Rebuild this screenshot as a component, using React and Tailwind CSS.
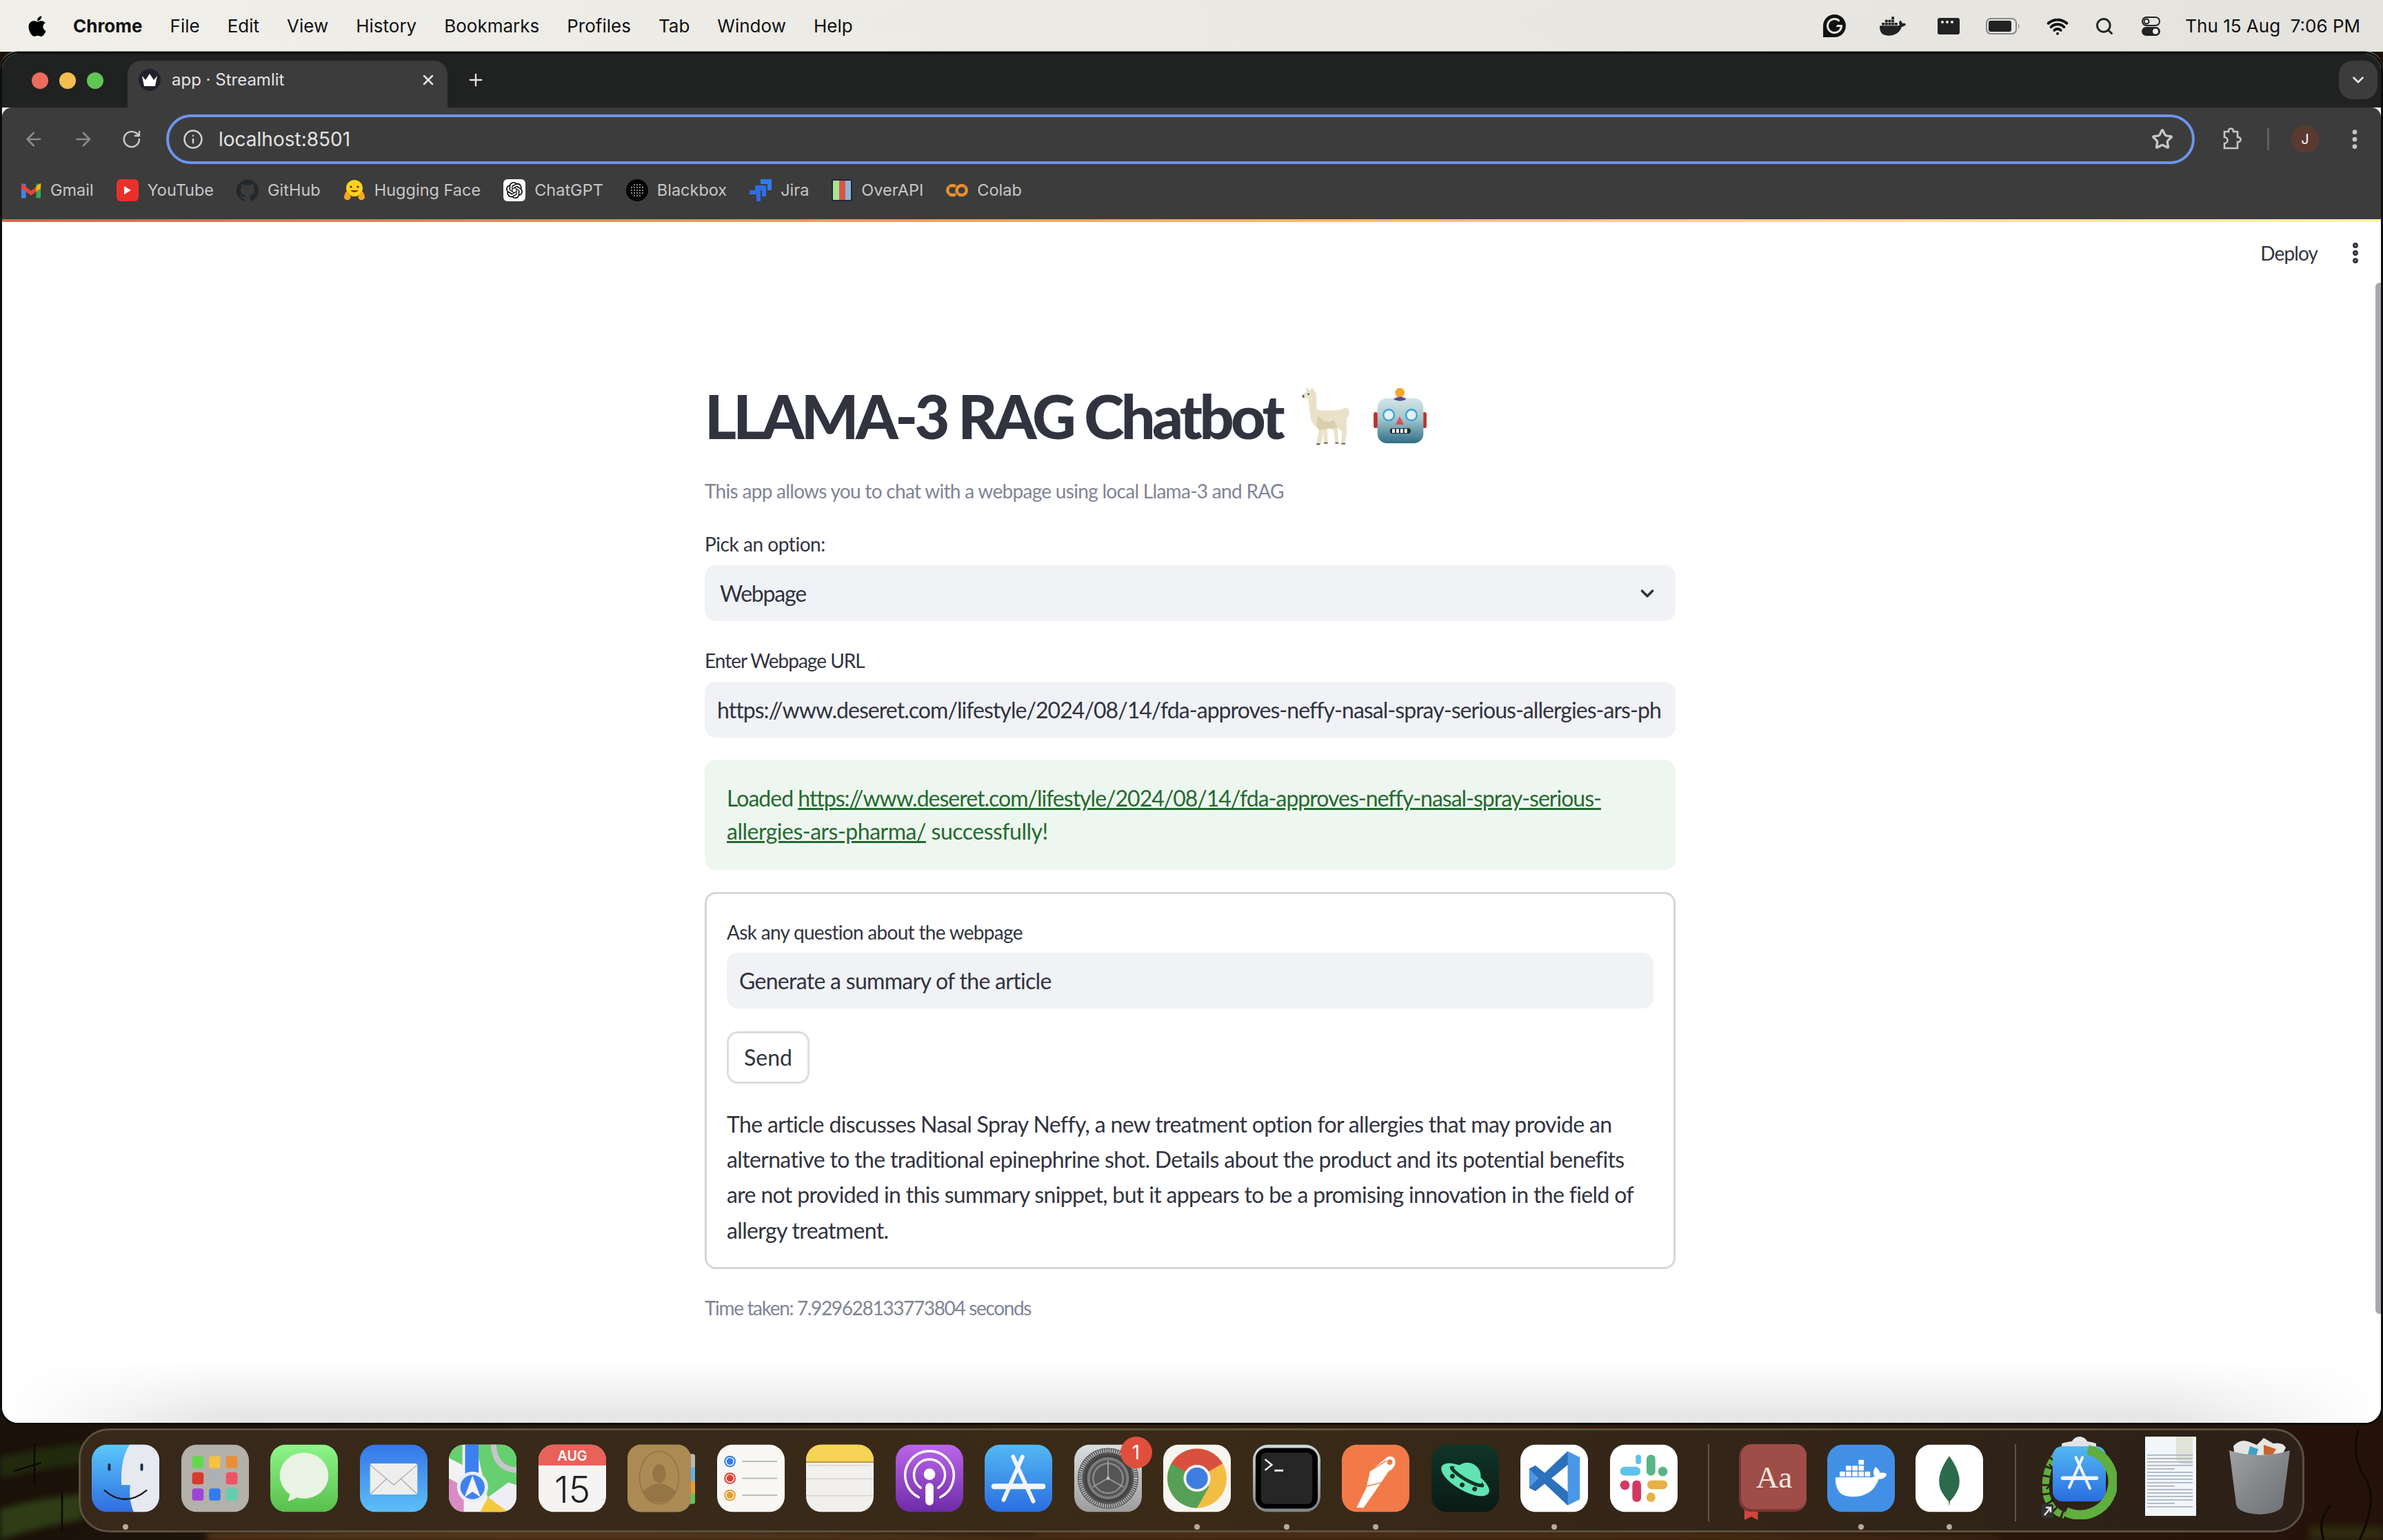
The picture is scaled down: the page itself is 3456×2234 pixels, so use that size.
import React from 'react';
import { FaApple } from 'react-icons/fa';
import { SiGrammarly, SiDocker, SiGithub, SiOpenai, SiGooglecolab } from 'react-icons/si';
import { ArrowLeft, ArrowRight, RotateCw, Info, Star, EllipsisVertical, ChevronDown, Plus, X, Wifi, Search } from 'lucide-react';

const sans = 'font-["Lato",sans-serif]';
const sys = 'font-["Inter",sans-serif]';

const menus = ['File', 'Edit', 'View', 'History', 'Bookmarks', 'Profiles', 'Tab', 'Window', 'Help'];

const Gmail = () => (
  <svg viewBox="0 0 32 32" className="w-[30px] h-[32px]">
    <rect x="1" y="6" width="7" height="22" fill="#4285f4" />
    <rect x="24" y="6" width="7" height="22" fill="#34a853" />
    <path d="M1 5L16 17 31 5V13L16 24 1 13z" fill="#ea4335" />
    <path d="M24 10l7-5v8l-7 5z" fill="#fbbc04" />
  </svg>
);

const YouTube = () => (
  <div className="w-[32px] h-[32px] rounded-[6px] bg-[#e9302a] flex items-center justify-center">
    <svg viewBox="0 0 10 12" className="w-[10px] h-[12px]"><path d="M0 0l10 6-10 6z" fill="#fff" /></svg>
  </div>
);

const Hugging = () => (
  <svg viewBox="0 0 32 32" className="w-[32px] h-[32px]">
    <circle cx="16" cy="13" r="12" fill="#ffd21e" />
    <circle cx="11" cy="11" r="1.6" fill="#333" />
    <circle cx="21" cy="11" r="1.6" fill="#333" />
    <path d="M10 16q6 6 12 0z" fill="#8a2f22" />
    <path d="M1 26q1-8 5-9l5 9q-2 5-6 4t-4-4zM31 26q-1-8-5-9l-5 9q2 5 6 4t4-4z" fill="#f5a623" />
  </svg>
);

const Gpt = () => (
  <div className="w-[32px] h-[32px] rounded-[6px] bg-white flex items-center justify-center text-black">
    <SiOpenai className="w-[24px] h-[24px]" />
  </div>
);

const Blackbox = () => (
  <svg viewBox="0 0 32 32" className="w-[32px] h-[32px]">
    <circle cx="16" cy="16" r="16" fill="#050505" />
    {[-8, -4, 0, 4, 8].map((dx) =>
      [-8, -4, 0, 4, 8].map((dy) =>
        dx * dx + dy * dy < 90 ? <circle key={`${dx}${dy}`} cx={16 + dx} cy={16 + dy} r="1" fill="#b5b5b5" /> : null
      )
    )}
  </svg>
);

const Jira = () => (
  <svg viewBox="0 0 32 32" className="w-[32px] h-[32px]">
    <path d="M16 0h16v16h-6V7h-10z" fill="#2f7bf0" />
    <path d="M8 9h16v16h-6v-9H8z" fill="#2a6fe8" />
    <path d="M0 16h16v16h-6v-10H0z" fill="#2b6de6" />
  </svg>
);

const OverApi = () => (
  <div className="w-[30px] h-[32px] flex rounded-[3px] border-2 border-[#20263a] overflow-hidden">
    <div className="flex-1 bg-[#a6e58f]" />
    <div className="flex-1 bg-[#d9534a]" />
    <div className="flex-1 bg-[#8fb4d8]" />
  </div>
);

const bookmarks = [
  { name: 'Gmail', icon: <Gmail /> },
  { name: 'YouTube', icon: <YouTube /> },
  { name: 'GitHub', icon: <SiGithub className="w-[32px] h-[32px] text-[#23282c]" /> },
  { name: 'Hugging Face', icon: <Hugging /> },
  { name: 'ChatGPT', icon: <Gpt /> },
  { name: 'Blackbox', icon: <Blackbox /> },
  { name: 'Jira', icon: <Jira /> },
  { name: 'OverAPI', icon: <OverApi /> },
  { name: 'Colab', icon: <SiGooglecolab className="w-[32px] h-[32px] text-[#e8912d]" /> },
];

const Tile = ({ children, fill = '#fff', id, stops }) => (
  <svg viewBox="0 0 100 100" className="w-full h-full">
    {stops && (
      <defs>
        <linearGradient id={id} x1="0" y1="0" x2="0" y2="1">
          <stop offset="0" stopColor={stops[0]} />
          <stop offset="1" stopColor={stops[1]} />
        </linearGradient>
      </defs>
    )}
    <clipPath id={`${id}-c`}><rect width="100" height="100" rx="23" /></clipPath>
    <g clipPath={`url(#${id}-c)`}>
      <rect width="100" height="100" fill={stops ? `url(#${id})` : fill} />
      {children}
    </g>
  </svg>
);

const Finder = () => (
  <Tile id="finder" stops={['#5ac8fa', '#2f6de0']}>
    <path d="M56 0h44v100H62Q54 80 57 60H44Q42 22 56 0z" fill="#e6e9f0" />
    <rect x="24" y="28" width="4" height="11" rx="2" fill="#1f2a44" />
    <rect x="72" y="28" width="4" height="11" rx="2" fill="#1f2a44" />
    <path d="M19 68q30 26 62 0" fill="none" stroke="#1c1c24" strokeWidth="2.5" strokeLinecap="round" />
  </Tile>
);

const Launchpad = () => {
  const colors = ['#62d84e', '#f5c242', '#e98f35', '#d83a2e', '#a9b2b5', '#ee5267', '#9b45d8', '#2f7df0', '#5fd0ae'];
  return (
    <Tile id="launch" fill="#b4b0aa">
      {colors.map((c, i) => (
        <rect key={c} x={16 + (i % 3) * 25} y={17 + Math.floor(i / 3) * 24} width="17" height="18" rx="4" fill={c} />
      ))}
    </Tile>
  );
};

const Messages = () => (
  <Tile id="msg" stops={['#8df58a', '#58bf4c']}>
    <ellipse cx="50" cy="46" rx="36" ry="34" fill="#e8f3e4" />
    <path d="M30 70l-4 14q12-3 18-10z" fill="#e8f3e4" />
  </Tile>
);

const Mail = () => (
  <Tile id="mail" stops={['#3576e8', '#5cc0f8']}>
    <rect x="15" y="28" width="70" height="46" rx="3" fill="#eeeeee" />
    <path d="M15 30l35 30 35-30M15 74l25-24M85 74L60 50" fill="none" stroke="#a8a8a8" strokeWidth="1.2" />
  </Tile>
);

const Maps = () => (
  <Tile id="maps" fill="#f2f2f2">
    <path d="M44 0h56v60L90 58 60 90 44 20z" fill="#66cf70" />
    <path d="M0 0h20v30L0 20z" fill="#66cf70" />
    <path d="M0 50l22 12v38H0z" fill="#d98bc4" />
    <path d="M46 100l12-22 30 22z" fill="#f4c93c" />
    <path d="M58 78l30-22 12 4v40H88z" fill="#eeeef4" />
    <rect x="24" y="0" width="20" height="50" fill="#3a80ee" />
    <path d="M66 0q2 36 34 38" fill="none" stroke="#c8c5cc" strokeWidth="8" />
    <circle cx="35" cy="63" r="23" fill="#e9eef7" />
    <circle cx="35" cy="63" r="18" fill="#3f82ee" />
    <path d="M35 46l12 32-12-8-12 8z" fill="#f2f5fb" />
  </Tile>
);

const Calendar = () => (
  <Tile id="cal" fill="#f5f4f2">
    <rect width="100" height="31" fill="#e8625a" />
    <text x="50" y="24" textAnchor="middle" fill="#fff" fontFamily="Inter, sans-serif" fontSize="20" fontWeight="600">AUG</text>
    <text x="50" y="86" textAnchor="middle" fill="#222" fontFamily="Inter, sans-serif" fontSize="54" fontWeight="300">15</text>
  </Tile>
);

const Contacts = () => (
  <svg viewBox="0 0 100 100" className="w-full h-full">
    <rect x="88" y="14" width="12" height="22" rx="3" fill="#b8b8b8" />
    <rect x="88" y="34" width="12" height="22" fill="#59b5f0" />
    <rect x="88" y="54" width="12" height="20" fill="#ef9a2e" />
    <rect x="88" y="72" width="12" height="16" rx="3" fill="#5ec45c" />
    <rect width="94" height="100" rx="20" fill="#ac8a54" />
    <ellipse cx="47" cy="49" rx="29" ry="39" fill="none" stroke="#947445" strokeWidth="1.6" />
    <ellipse cx="47" cy="43" rx="10" ry="14" fill="#957545" />
    <path d="M22 70q25-24 50 0q-8 16-25 16T22 70z" fill="#957545" />
  </svg>
);

const Reminders = () => (
  <Tile id="rem" fill="#f8f7f4">
    {[['#2f7df0', 25], ['#e33d33', 50], ['#ea9a2a', 75]].map(([c, y]) => (
      <g key={c}>
        <circle cx="19" cy={y} r="7.5" fill="#fff" stroke={c} strokeWidth="2" />
        <circle cx="19" cy={y} r="5" fill={c} />
        <rect x="37" y={y - 1} width="52" height="2" fill="#bdbdbd" />
      </g>
    ))}
  </Tile>
);

const Notes = () => (
  <Tile id="notes" fill="#f1f0ec">
    <rect width="100" height="26" fill="#f7d356" />
    <rect y="25" width="100" height="2" fill="#b09a4a" />
    <path d="M4 31H96" stroke="#c3c1bb" strokeWidth="2" strokeDasharray="1.5 1.5" />
    <rect y="50" width="100" height="1.5" fill="#d5d3ce" />
    <rect y="75" width="100" height="1.5" fill="#d5d3ce" />
  </Tile>
);

const Podcasts = () => (
  <Tile id="pod" stops={['#bb66ea', '#6e2ba8']}>
    <g fill="none" stroke="#fff" strokeWidth="3.5" strokeLinecap="round">
      <path d="M34 78a36 36 0 1 1 32 0" />
      <path d="M37 64a23 23 0 1 1 26 0" />
    </g>
    <circle cx="50" cy="44" r="8.5" fill="#fff" />
    <rect x="44" y="57" width="12" height="33" rx="6" fill="#fff" />
  </Tile>
);

const AppGlyph = ({ s = 1, ox = 0, oy = 0 }) => (
  <g transform={`translate(${ox} ${oy}) scale(${s})`} stroke="#f2f6fc" strokeLinecap="round" fill="none">
    <path d="M56 18L28 82" strokeWidth="6" />
    <path d="M42 18L72 84" strokeWidth="6" />
    <path d="M14 62H86" strokeWidth="8" />
  </g>
);

const AppStore = () => (
  <Tile id="appst" stops={['#53b8f3', '#2a6ee0']}>
    <AppGlyph />
  </Tile>
);

const Settings = () => (
  <div className="relative w-full h-full">
    <Tile id="sett" stops={['#d8dfe3', '#9d9d9d']}>
      <circle cx="50" cy="50" r="45" fill="#505050" />
      <circle cx="50" cy="50" r="41" fill="none" stroke="#c0c0c0" strokeWidth="6" strokeDasharray="1.6 1.6" />
      <circle cx="50" cy="50" r="35" fill="#444" />
      <circle cx="50" cy="50" r="31" fill="#7d7d7d" />
      <circle cx="50" cy="50" r="27" fill="#555" />
      <circle cx="50" cy="50" r="22" fill="none" stroke="#8a8a8a" strokeWidth="2.5" />
      <path d="M50 50L50 24M50 50L73 63M50 50L27 63" stroke="#9a9a9a" strokeWidth="2" />
      <circle cx="50" cy="50" r="2.5" fill="#bbb" />
    </Tile>
    <div className={`absolute top-[-11px] right-[-15px] w-[46px] h-[46px] rounded-full bg-[#e04f3d] text-white text-[28px] flex items-center justify-center ${sys}`}>1</div>
  </div>
);

const Chrome = () => (
  <Tile id="chr" fill="#f7f5f0">
    <circle cx="50" cy="50" r="44" fill="#f2bd42" />
    <path d="M50 50L88 28A44 44 0 0 0 12 28L30 62z" fill="#d9503f" />
    <path d="M50 50L12 28A44 44 0 0 0 50 94L68 62z" fill="#55a056" />
    <circle cx="50" cy="50" r="20" fill="#f5f5f5" />
    <circle cx="50" cy="50" r="16" fill="#3f7de0" />
  </Tile>
);

const Terminal = () => (
  <Tile id="term" stops={['#c9d9de', '#7f8488']}>
    <rect x="4" y="5" width="92" height="90" rx="16" fill="#000" />
    <rect x="12" y="12" width="76" height="76" rx="8" fill="#262626" />
    <path d="M18 22l10 8-10 8" fill="none" stroke="#eee" strokeWidth="2.5" />
    <rect x="32" y="37" width="13" height="3" fill="#eee" />
  </Tile>
);

const Postman = () => (
  <Tile id="post" fill="#f17a48">
    <path d="M68 18q10-2 11 7t-10 15L50 68 32 94l-10-1 14-28 6-26z" fill="#fff" />
    <path d="M40 40l26-16M36 62l24-6" stroke="#f17a48" strokeWidth="1.5" />
    <circle cx="71" cy="26" r="4" fill="#f17a48" />
  </Tile>
);

const Ufo = () => (
  <Tile id="ufo" stops={['#113528', '#0a1a15']}>
    <g transform="rotate(30 50 52)">
      <path d="M30 46a20 20 0 0 1 40 0z" fill="#62e3b4" />
      <ellipse cx="50" cy="52" rx="40" ry="16" fill="#62e3b4" />
      <ellipse cx="50" cy="47" rx="29" ry="7" fill="#113528" />
      <ellipse cx="50" cy="44" rx="24" ry="5" fill="#62e3b4" />
      <circle cx="31" cy="57" r="3.5" fill="#113528" />
      <circle cx="50" cy="61" r="3.5" fill="#113528" />
      <circle cx="69" cy="57" r="3.5" fill="#113528" />
    </g>
  </Tile>
);

const VsCode = () => (
  <Tile id="vsc" fill="#fff">
    <path d="M70 10l18 9v62l-18 9-34-32-14 11-9-5V36l9-5 14 11z" fill="#4a97e8" />
    <path d="M70 10v80L36 58 22 69l-9-5 14-14-14-14 9-5 14 11z" fill="#2d70bb" />
    <path d="M70 30v40L46 50z" fill="#fff" />
  </Tile>
);

const Slack = () => (
  <Tile id="slk" fill="#fff">
    <rect x="15" y="33" width="30" height="13" rx="6.5" fill="#5ec2ee" />
    <rect x="38" y="15" width="8" height="14" rx="4" fill="#5ec2ee" />
    <rect x="54" y="15" width="13" height="31" rx="6.5" fill="#58b585" />
    <circle cx="78" cy="40" r="7" fill="#58b585" />
    <rect x="55" y="53" width="30" height="13" rx="6.5" fill="#e5b243" />
    <rect x="54" y="71" width="13" height="14" rx="6.5" fill="#e5b243" />
    <rect x="33" y="53" width="13" height="32" rx="6.5" fill="#d23a62" />
    <circle cx="22" cy="60" r="7" fill="#d23a62" />
  </Tile>
);

const Dictionary = () => (
  <svg viewBox="0 0 100 112" className="w-full h-[110px] self-start">
    <path d="M8 96h20v16l-10-5-10 5z" fill="#d0473a" />
    <rect width="100" height="100" rx="18" fill="#7d3530" />
    <rect x="3" width="97" height="96" rx="16" fill="#9e4d48" />
    <text x="52" y="64" textAnchor="middle" fill="#f2e6dc" fontFamily="Liberation Serif, serif" fontSize="46">Aa</text>
  </svg>
);

const Docker = () => (
  <Tile id="dok" fill="#4290e6">
    <foreignObject x="12" y="12" width="76" height="76">
      <SiDocker className="w-full h-full text-white" />
    </foreignObject>
  </Tile>
);

const Mongo = () => (
  <Tile id="mgo" fill="#fff">
    <path d="M50 17Q74 50 60 72Q55 80 51 84L50 92L49 84Q45 80 40 72Q26 50 50 17z" fill="#2b6a4d" />
  </Tile>
);

const Installer = () => (
  <svg viewBox="0 0 110 120" className="w-[110px] h-[120px] self-start">
    <defs>
      <linearGradient id="inst" x1="0" y1="0" x2="0" y2="1">
        <stop offset="0" stopColor="#53b8f3" />
        <stop offset="1" stopColor="#2a6ee0" />
      </linearGradient>
    </defs>
    <circle cx="56" cy="12" r="12" fill="#e8e8e8" />
    <path d="M30 10q26-8 50 0v10H30z" fill="#dfe3e6" />
    <path d="M24 24Q2 50 8 86q8 24 26 28" fill="none" stroke="#5fae3e" strokeWidth="10" strokeDasharray="10 3" />
    <path d="M12 40l24 30M8 76l28-30M12 96l24-26" stroke="#222" strokeWidth="2.5" />
    <rect x="17" y="14" width="77" height="80" rx="14" fill="url(#inst)" />
    <path d="M68 19A48 48 0 1 1 36 109" fill="none" stroke="#5fae3e" strokeWidth="14" />
    <AppGlyph s={0.68} ox={22} oy={18} />
    <rect x="1" y="98" width="17" height="20" rx="3" fill="#333" />
    <path d="M5 114l9-11M7 103h7v7" fill="none" stroke="#e9e9e9" strokeWidth="2.5" />
  </svg>
);

const Doc = () => (
  <svg viewBox="0 0 77 115" className="w-[77px] h-[115px] self-start">
    <rect width="77" height="115" fill="#f3f6f8" />
    <rect x="0" width="3" height="115" fill="#222" />
    <path d="M48 0h24v40H60Q48 40 48 30z" fill="#dfe3d8" />
    {Array.from({ length: 16 }, (_, i) => (
      <rect key={i} x="6" y={26 + i * 5} width={i % 5 === 4 ? 40 : 66} height="1.6" fill="#9fb0c4" />
    ))}
  </svg>
);

const Trash = () => (
  <svg viewBox="0 0 88 113" className="w-[88px] h-[113px] self-start ml-[10px]">
    <defs>
      <linearGradient id="trash" x1="0" y1="0" x2="1" y2="1">
        <stop offset="0" stopColor="#a0a2a3" />
        <stop offset="0.5" stopColor="#83878a" />
        <stop offset="1" stopColor="#6d7072" />
      </linearGradient>
    </defs>
    <path d="M6 14q10-12 24-6l10 4 10-10 14 8q14-2 18 6l-6 12H8z" fill="#e5e5e5" />
    <path d="M30 14l12 4-3 10-12-2z" fill="#3fa0c0" />
    <path d="M50 12l18 6-6 10-12-2z" fill="#c9642e" />
    <path d="M0 20q44 14 88 0L78 98q-2 13-34 15Q12 111 10 98z" fill="url(#trash)" />
  </svg>
);

const firstDock = [Finder, Launchpad, Messages, Mail, Maps, Calendar, Contacts, Reminders, Notes, Podcasts, AppStore, Settings, Chrome, Terminal, Postman, Ufo, VsCode, Slack];
const running = ['Finder', 'Chrome', 'Terminal', 'Postman', 'VsCode', 'Docker', 'Mongo'];

const DockItem = ({ Icon }) => (
  <div className="relative w-[98px] h-[99px] shrink-0">
    <Icon />
    {running.includes(Icon.name) && (
      <span className="absolute left-[45px] top-[116px] w-[8px] h-[8px] rounded-full bg-[#b5ab97]" />
    )}
  </div>
);

const Wallpaper = () => (
  <svg viewBox="0 0 3456 170" className="absolute left-0 bottom-0 w-[3456px] h-[170px]" preserveAspectRatio="none">
    <defs>
      <linearGradient id="wall" x1="0" y1="0" x2="1" y2="0">
        <stop offset="0" stopColor="#1a1109" />
        <stop offset="0.5" stopColor="#33200f" />
        <stop offset="1" stopColor="#24120a" />
      </linearGradient>
      <filter id="soft"><feGaussianBlur stdDeviation="5" /></filter>
    </defs>
    <rect width="3456" height="170" fill="url(#wall)" />
    <g filter="url(#soft)">
      <path d="M0 50Q60 36 120 30V60Q60 66 0 80z" fill="#232c10" />
      <path d="M0 125Q60 108 120 104V140Q60 150 0 170z" fill="#2e3c15" />
      <path d="M300 160Q900 152 1500 166V170H300z" fill="#5c3a1c" />
      <path d="M1500 158Q2100 152 2900 166V170H1500z" fill="#4e2f15" />
      <path d="M3350 150h106v20h-106z" fill="#2f2a10" />
    </g>
    <path d="M3380 120q-20 20-10 50M3420 10q-10 40 10 70t-8 90" fill="none" stroke="#100804" strokeWidth="3" />
    <path d="M50 30v60M90 100v60M20 70l40-12" stroke="#0d0a05" strokeWidth="2.5" />
  </svg>
);

const Llama = () => (
  <svg viewBox="40 50 230 265" className="w-[76px] h-[88px]" role="img" aria-label="llama">
    <path d="M68 55L85 72 95 58 103 72Q115 85 113 105L115 155Q150 165 225 155 232 145 250 150 262 165 255 185L245 195 247 240 240 305 222 308 225 250 205 235 210 300 195 305 190 250Q175 235 160 240L163 300 145 305 145 250 135 305 112 310 125 245Q90 220 85 180L78 105 55 105Q45 98 52 92L70 78z" fill="#e9e2c9" />
    <path d="M120 180Q150 225 190 200L205 235Q160 240 125 245Q105 225 120 180z" fill="#d8cfae" />
    <circle cx="78" cy="88" r="3.5" fill="#222" />
    <path d="M50 95l8-5 2 12-6 2z" fill="#555" />
    <path d="M112 310h18l-2-6h-12zM145 305h18v-5h-16zM195 305h15v-5h-13zM222 308h18v-5h-16z" fill="#55524a" />
  </svg>
);

const Robot = () => (
  <svg viewBox="355 50 240 250" className="w-[79px] h-[82px]" role="img" aria-label="robot">
    <defs>
      <linearGradient id="head" x1="0" y1="0" x2="0" y2="1">
        <stop offset="0" stopColor="#d5e6e8" />
        <stop offset="0.45" stopColor="#a4c7cc" />
        <stop offset="1" stopColor="#2f6f86" />
      </linearGradient>
    </defs>
    <rect x="358" y="160" width="18" height="70" rx="7" fill="#b8322e" />
    <rect x="574" y="160" width="18" height="70" rx="7" fill="#b8322e" />
    <rect x="375" y="97" width="203" height="200" rx="42" fill="url(#head)" />
    <circle cx="474" cy="73" r="21" fill="#f4a72a" />
    <path d="M445 102q30-22 58 0q-28 16-58 0z" fill="#5c4a8f" />
    <circle cx="425" cy="172" r="24" fill="#e6f0f5" stroke="#3fa7de" strokeWidth="8" />
    <circle cx="525" cy="172" r="24" fill="#e6f0f5" stroke="#3fa7de" strokeWidth="8" />
    <path d="M473 178l-18 37h37z" fill="#d9505a" />
    <rect x="430" y="231" width="92" height="23" rx="11" fill="#1f2a30" />
    <path d="M446 234v17M464 234v17M482 234v17M500 234v17" stroke="#f4f4f4" strokeWidth="12" />
  </svg>
);

export default function App() {
  return (
    <div className="relative w-[3456px] h-[2234px] overflow-hidden flex flex-col bg-[#1c120a]">
      <Wallpaper />

      {/* mac menu bar */}
      <div className={`relative h-[75px] shrink-0 flex items-center justify-between pl-[38px] pr-[33px] bg-gradient-to-r from-[#f0efea] to-[#e4e3de] text-[#111] text-[26px] ${sys}`}>
        <div className="flex items-center gap-[40px]">
          <div className="flex items-center gap-[36px]">
            <FaApple className="w-[32px] h-[34px] text-black" />
            <span className="font-bold">Chrome</span>
          </div>
          {menus.map((m) => <span key={m}>{m}</span>)}
        </div>
        <div className="flex items-center">
          <SiGrammarly className="w-[33px] h-[33px] mr-[49px]" />
          <SiDocker className="w-[38px] h-[38px] mr-[46px] text-[#222]" />
          <svg viewBox="0 0 32 24" className="w-[32px] h-[24px] mr-[38px]">
            <rect width="32" height="24" rx="3" fill="#222" />
            <circle cx="7" cy="6" r="2" fill="#eee" /><circle cx="14" cy="6" r="2" fill="#eee" /><circle cx="21" cy="6" r="2" fill="#eee" />
          </svg>
          <svg viewBox="0 0 50 24" className="w-[50px] h-[24px] mr-[36px]">
            <rect x="1" y="1" width="43" height="22" rx="6" fill="none" stroke="#888" strokeWidth="2" />
            <rect x="4" y="4" width="33" height="16" rx="3" fill="#222" />
            <path d="M47 8q3 4 0 8z" fill="#888" />
          </svg>
          <Wifi className="w-[36px] h-[32px] mr-[36px] text-[#111]" strokeWidth={3} />
          <Search className="w-[28px] h-[30px] mr-[40px] text-[#222]" strokeWidth={2.5} />
          <svg viewBox="0 0 27 28" className="w-[27px] h-[28px] mr-[36px]">
            <rect x="1" y="1" width="25" height="12" rx="6" fill="none" stroke="#222" strokeWidth="2" />
            <circle cx="7" cy="7" r="3.5" fill="none" stroke="#222" strokeWidth="2" />
            <rect y="15" width="27" height="13" rx="6.5" fill="#222" />
            <circle cx="20" cy="21.5" r="4" fill="#eee" />
          </svg>
          <span>Thu 15 Aug&nbsp;&nbsp;7:06 PM</span>
        </div>
      </div>

      {/* browser window */}
      <div className="relative h-[1992px] shrink-0 flex flex-col rounded-[26px] border-[3px] border-[#0d0d0d] bg-white overflow-hidden shadow-[0_-1px_0_#888]">
        <div className={`h-[78px] shrink-0 flex items-end bg-[#202221] text-[#e3e3e3] ${sys}`}>
          <div className="flex items-center gap-[16px] self-start h-[78px] pl-[43px] pr-[35px]">
            <span className="w-[24px] h-[24px] rounded-full bg-[#ed6a5e]" />
            <span className="w-[24px] h-[24px] rounded-full bg-[#f5bf4f]" />
            <span className="w-[24px] h-[24px] rounded-full bg-[#61c554]" />
          </div>
          <div className="w-[464px] h-[68px] flex items-center pl-[16px] pr-[16px] pb-[12px] rounded-t-[20px] bg-[#3c3c3c] text-[24px]">
            <span className="w-[32px] h-[32px] mr-[16px] rounded-full bg-[#20202c] flex items-center justify-center">
              <svg viewBox="0 0 22 18" className="w-[22px] h-[18px]"><path d="M0 3l5 6 6-9 6 9 5-6-3 15H3z" fill="#fff" /></svg>
            </span>
            <span className="flex-1">app · Streamlit</span>
            <X className="w-[24px] h-[24px]" strokeWidth={2.5} />
          </div>
          <div className="h-[68px] flex items-center pb-[12px] ml-[27px]">
            <Plus className="w-[28px] h-[28px]" />
          </div>
          <div className="flex-1" />
          <div className="w-[56px] h-[56px] mb-[12px] mr-[5px] rounded-[20px] bg-[#3c3c3c] flex items-center justify-center">
            <ChevronDown className="w-[26px] h-[26px]" strokeWidth={2.5} />
          </div>
        </div>

        <div className={`h-[162px] shrink-0 flex flex-col bg-[#3c3c3c] rounded-t-[14px] ${sys}`}>
          <div className="h-[92px] shrink-0 flex items-center pl-[30px] pr-[20px]">
            <ArrowLeft className="w-[32px] h-[32px] text-[#8a8a8a] mr-[40px]" />
            <ArrowRight className="w-[32px] h-[32px] text-[#8a8a8a] mr-[40px]" />
            <RotateCw className="w-[30px] h-[30px] text-[#c7c7c7] mr-[35px]" />
            <div className="w-[2942px] h-[72px] flex items-center pl-[20px] pr-[27px] rounded-full border-[4px] border-[#6d95ec] shrink-0">
              <Info className="w-[30px] h-[30px] text-[#d0d0d0] mr-[22px]" />
              <span className="flex-1 text-[28px] text-[#e3e3e3]">localhost:8501</span>
              <Star className="w-[32px] h-[32px] text-[#c7c7c7]" strokeWidth={2.5} />
            </div>
            <svg viewBox="0 0 34 34" className="w-[34px] h-[34px] ml-[36px] shrink-0">
              <path d="M7 6h6V5a3.5 3.5 0 0 1 7 0v1h6v8h1a3.5 3.5 0 0 1 0 7h-1v9H7v-7a3.5 3.5 0 0 0 0-9z" fill="none" stroke="#c7c7c7" strokeWidth="2.6" />
            </svg>
            <span className="w-[3px] h-[32px] ml-[35px] bg-[#5f5f5f] shrink-0" />
            <span className="w-[40px] h-[40px] ml-[32px] rounded-full bg-[#5a3a30] text-white text-[20px] flex items-center justify-center shrink-0">J</span>
            <EllipsisVertical className="w-[36px] h-[36px] ml-[34px] text-[#c7c7c7] shrink-0" strokeWidth={2.5} />
          </div>
          <div className="flex items-center h-[56px] pl-[27px] gap-[33px] text-[23.5px] text-[#c7c7c7]">
            {bookmarks.map((b) => (
              <div key={b.name} className="flex items-center gap-[13px]">
                {b.icon}
                <span>{b.name}</span>
              </div>
            ))}
          </div>
        </div>

        <div className="h-[4px] shrink-0 bg-gradient-to-r from-[#ea5a53] to-[#fffd80]" />

        {/* streamlit page */}
        <main className={`relative flex-1 bg-white text-[#31333f] ${sans}`}>
          <div className="h-[90px] flex items-center justify-end pr-[18px] gap-[36px] text-[28px]">
            <span className="tracking-[-0.9px]">Deploy</span>
            <EllipsisVertical className="w-[38px] h-[38px] text-[#31333f]" strokeWidth={3} />
          </div>

          <div className="ml-[1019px] w-[1408px] flex flex-col">
            <h1 className="mt-[131px] h-[120px] flex items-center gap-[26px] text-[88px] font-black tracking-[-4.6px] whitespace-nowrap">
              LLAMA-3 RAG Chatbot
              <span className="flex items-center gap-[30px] tracking-normal">
                <Llama />
                <Robot />
              </span>
            </h1>
            <p className="mt-[27px] h-[44px] flex items-center text-[28px] text-[#808495] tracking-[-0.7px]">
              This app allows you to chat with a webpage using local Llama-3 and RAG
            </p>

            <label className="mt-[35px] h-[40px] flex items-center text-[28px] tracking-[-0.45px]">Pick an option:</label>
            <div className="mt-[11px] h-[81px] flex items-center justify-between pl-[22px] pr-[26px] rounded-[16px] bg-[#f0f2f6] text-[32px]">
              <span className="tracking-[-1.2px]">Webpage</span>
              <ChevronDown className="w-[30px] h-[30px]" strokeWidth={3} />
            </div>

            <label className="mt-[37px] h-[40px] flex items-center text-[28px] tracking-[-1px]">Enter Webpage URL</label>
            <div className="mt-[11px] h-[81px] flex items-center pl-[18px] pr-[20px] rounded-[16px] bg-[#f0f2f6] text-[32px] tracking-[-0.95px] whitespace-nowrap overflow-hidden">
              https://www.deseret.com/lifestyle/2024/08/14/fda-approves-neffy-nasal-spray-serious-allergies-ars-ph
            </div>

            <div className="mt-[32px] h-[160px] px-[32px] py-[32px] rounded-[16px] bg-[#edf7ef] text-[#27692f] text-[32px] leading-[48px] whitespace-nowrap">
              <span className="tracking-[-1px]">Loaded <a className="underline">https://www.deseret.com/lifestyle/2024/08/14/fda-approves-neffy-nasal-spray-serious-</a></span>
              <br />
              <span className="tracking-[-0.5px]"><a className="underline">allergies-ars-pharma/</a> successfully!</span>
            </div>

            <div className="mt-[32px] h-[547px] flex flex-col px-[29px] pt-[35px] rounded-[16px] border-[3px] border-[#d6d6d8]">
              <label className="h-[40px] flex items-center text-[28px] tracking-[-0.7px]">Ask any question about the webpage</label>
              <div className="mt-[10px] h-[81px] shrink-0 flex items-center pl-[18px] rounded-[16px] bg-[#f0f2f6] text-[32px] tracking-[-0.7px]">
                Generate a summary of the article
              </div>
              <button className="mt-[33px] w-[120px] h-[76px] shrink-0 rounded-[16px] border-[3px] border-[#dcdde1] bg-white text-[32px]">Send</button>
              <p className="mt-[33px] text-[32px] leading-[51.2px] tracking-[-0.65px] whitespace-nowrap">
                The article discusses Nasal Spray Neffy, a new treatment option for allergies that may provide an
                <br />
                alternative to the traditional epinephrine shot. Details about the product and its potential benefits
                <br />
                are not provided in this summary snippet, but it appears to be a promising innovation in the field of
                <br />
                allergy treatment.
              </p>
            </div>

            <p className="mt-[34px] h-[44px] flex items-center text-[28px] text-[#808495] tracking-[-1.35px]">Time taken: 7.929628133773804 seconds</p>
          </div>

          <div className="absolute top-[88px] right-0 w-[8px] h-[1496px] rounded-l-[6px] bg-[#a9a8ae]" />
          <div className="absolute left-0 right-0 bottom-0 h-[90px] bg-gradient-to-t from-[#e4e4e4] to-transparent [mask-image:linear-gradient(to_right,transparent,black_320px,black_calc(100%-320px),transparent)]" />
        </main>
      </div>

      {/* dock */}
      <div className="relative mt-[5px] ml-[114px] w-[3228px] h-[151px] shrink-0 flex items-start pt-[20px] pl-[16px] rounded-[44px] border-[3px] border-[#5a5040] bg-gradient-to-r from-[#37281a] via-[#3a2a17] to-[#2c2018]">
        <div className="flex gap-[31.5px]">
          {firstDock.map((Icon) => <DockItem key={Icon.name} Icon={Icon} />)}
        </div>
        <span className="w-[2px] h-[112px] ml-[44px] mr-[43px] bg-[#5f564a] shrink-0" />
        <div className="flex gap-[30px]">
          <DockItem Icon={Dictionary} />
          <DockItem Icon={Docker} />
          <DockItem Icon={Mongo} />
        </div>
        <span className="w-[2px] h-[112px] ml-[46px] mr-[36px] bg-[#5f564a] shrink-0" />
        <div className="flex items-start gap-[38px] -mt-[11px]">
          <Installer />
          <Doc />
          <Trash />
        </div>
      </div>
    </div>
  );
}
